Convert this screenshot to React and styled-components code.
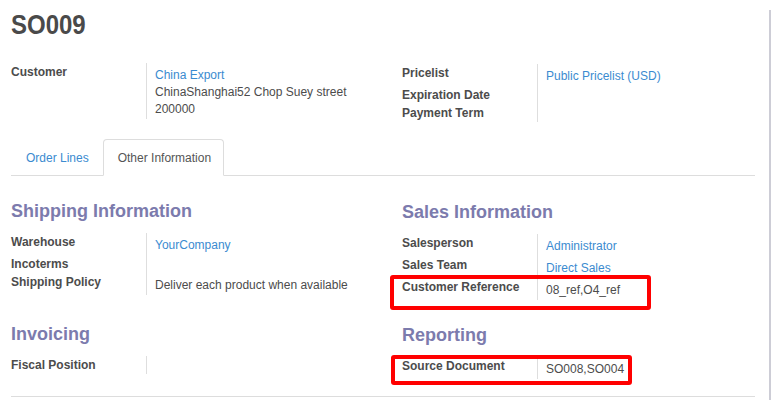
import React from 'react'
import styled, { createGlobalStyle, css } from 'styled-components'

const GlobalStyle = createGlobalStyle`
    html, body {
        margin: 0;
        padding: 0;
        background: #fff;
    }
    body {
        font-family: "Liberation Sans", Arial, sans-serif;
        font-size: 12px;
        color: #4c4c4c;
    }
`

const Page = styled.div`
    width: 771px;
    height: 400px;
    overflow: hidden;
    background: #fff;
`
const Sheet = styled.div`
    width: 744px;
    height: 400px;
    padding: 0 14px 0 11px;
    border-right: 2px solid #cdcdd6;
`
const Title = styled.h1`
    margin: 10px 0 0;
    font-size: 24px;
    line-height: 32px;
    font-weight: bold;
    color: #4a4a4a;
    transform: scaleY(1.12);
    transform-origin: 0 70%;
`
const Columns = styled.div`
    display: grid;
    grid-template-columns: 391px 1fr;
    margin-top: ${p => p.$top || 0}px;
`
const Column = styled.div`
    display: flex;
    flex-direction: column;
    align-items: flex-start;
`
const SectionTitle = styled.h2`
    margin: 0 0 11px;
    font-size: 18px;
    line-height: 22px;
    font-weight: bold;
    color: #7c7bad;
    position: relative;
    top: ${p => p.$shift || 0}px;
`
const FieldList = styled.div`
    display: flex;
    flex-direction: column;
    margin-top: ${p => p.$shift || 0}px;
`
const FieldRow = styled.div`
    position: relative;
    display: grid;
    grid-template-columns: 135px auto;
    ${p => p.$mark && css`
        &::after {
            content: '';
            position: absolute;
            left: ${p.$mark.x}px;
            top: ${p.$mark.y}px;
            width: ${p.$mark.w}px;
            height: ${p.$mark.h}px;
            box-sizing: border-box;
            border: 4px solid #ff0000;
            border-radius: 3px;
            pointer-events: none;
        }
    `}
`
const Label = styled.div`
    padding-top: 1px;
    line-height: 17px;
    font-weight: bold;
    color: #4c4c4c;
`
const Value = styled.div`
    min-width: 220px;
    padding: 4px 0 1px 8px;
    line-height: 17px;
    border-left: 1px solid #dedede;
    color: #4c4c4c;
`
const Link = styled.a`
    color: #3b8bd0;
    text-decoration: none;
`
const Tabs = styled.ul`
    display: flex;
    list-style: none;
    margin: 17px 0 0;
    padding: 0;
    border-bottom: 1px solid #dddddd;
`
const Tab = styled.li`
    margin-right: 1px;
    margin-bottom: -1px;
    padding: 0 12px 0 14px;
    height: 35px;
    line-height: 37px;
    border: 1px solid transparent;
    border-radius: 4px 4px 0 0;
    color: #3b8bd0;
    ${p => p.$active && css`
        color: #555;
        background: #fff;
        border-color: #dddddd #dddddd transparent;
    `}
`
const Footer = styled.div`
    margin-top: 17px;
    border-top: 1px solid #dddddd;
`

const Field = ({ label, mark, children }) => (
    <FieldRow $mark={mark}>
        <Label>{label}</Label>
        <Value>{children}</Value>
    </FieldRow>
)

export default function App() {
    return (
        <Page>
            <GlobalStyle />
            <Sheet>
                <Title>SO009</Title>
                <Columns $top={21}>
                    <Column>
                        <FieldList>
                            <Field label="Customer">
                                <Link>China Export</Link>
                                <div>ChinaShanghai52 Chop Suey street</div>
                                <div>200000</div>
                            </Field>
                        </FieldList>
                    </Column>
                    <Column>
                        <FieldList $shift={1}>
                            <Field label="Pricelist"><Link>Public Pricelist (USD)</Link></Field>
                            <Field label="Expiration Date" />
                            <Field label="Payment Term" />
                        </FieldList>
                    </Column>
                </Columns>

                <Tabs>
                    <Tab>Order Lines</Tab>
                    <Tab $active>Other Information</Tab>
                </Tabs>

                <Columns $top={24}>
                    <Column>
                        <SectionTitle>Shipping Information</SectionTitle>
                        <FieldList>
                            <Field label="Warehouse"><Link>YourCompany</Link></Field>
                            <Field label="Incoterms" />
                            <Field label="Shipping Policy">Deliver each product when available</Field>
                        </FieldList>
                    </Column>
                    <Column>
                        <SectionTitle $shift={1}>Sales Information</SectionTitle>
                        <FieldList $shift={1}>
                            <Field label="Salesperson"><Link>Administrator</Link></Field>
                            <Field label="Sales Team"><Link>Direct Sales</Link></Field>
                            <Field label="Customer Reference" mark={{ x: -12, y: -3, w: 261, h: 35 }}>
                                08_ref,O4_ref
                            </Field>
                        </FieldList>
                    </Column>
                </Columns>

                <Columns $top={23}>
                    <Column>
                        <SectionTitle>Invoicing</SectionTitle>
                        <FieldList>
                            <Field label="Fiscal Position" />
                        </FieldList>
                    </Column>
                    <Column>
                        <SectionTitle $shift={1}>Reporting</SectionTitle>
                        <FieldList $shift={1}>
                            <Field label="Source Document" mark={{ x: -11, y: -2, w: 241, h: 30 }}>
                                SO008,SO004
                            </Field>
                        </FieldList>
                    </Column>
                </Columns>

                <Footer />
            </Sheet>
        </Page>
    )
}
